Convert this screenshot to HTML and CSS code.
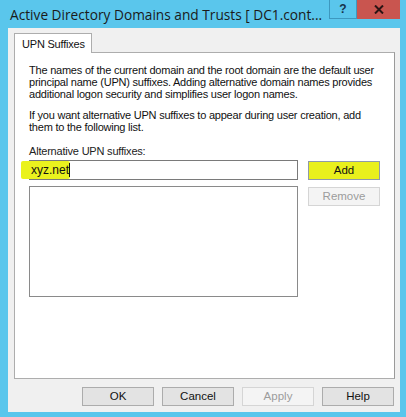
FILE: index.html
```html
<!DOCTYPE html>
<html>
<head>
<meta charset="utf-8">
<link rel="stylesheet" href="styles.css">
</head>
<body>
<div class="window">
  <div class="titlebar">
    <div class="title">Active Directory Domains and Trusts [ DC1.cont...</div>
    <div class="caption-btns">
      <div class="cap-help">?</div>
      <div class="cap-close">
        <svg width="10" height="9" viewBox="0 0 10 9"><path d="M1 0.5 L9 8.5 M9 0.5 L1 8.5" stroke="#2b1414" stroke-width="2"/></svg>
      </div>
    </div>
  </div>
  <div class="client">
    <div class="tabs">
      <div class="tab">UPN Suffixes</div>
    </div>
    <div class="panel">
      <p class="para">The names of the current domain and the root domain are the default user<br>principal name (UPN) suffixes. Adding alternative domain names provides<br>additional logon security and simplifies user logon names.</p>
      <p class="para para2">If you want alternative UPN suffixes to appear during user creation, add<br>them to the following list.</p>
      <div class="label">Alternative UPN suffixes:</div>
      <div class="row">
        <div class="input"><span class="hl">xyz.net</span><span class="caret"></span></div>
        <div class="btn btn-add">Add</div>
      </div>
      <div class="row row2">
        <div class="listbox"></div>
        <div class="btn disabled">Remove</div>
      </div>
    </div>
    <div class="footer">
      <div class="btn">OK</div>
      <div class="btn">Cancel</div>
      <div class="btn disabled">Apply</div>
      <div class="btn">Help</div>
    </div>
  </div>
</div>
</body>
</html>
```
FILE: styles.css
```css
html, body {
  margin: 0;
  padding: 0;
}
body {
  width: 406px;
  height: 417px;
  overflow: hidden;
  background: #5ac6ec;
  font-family: "Liberation Sans", Arial, sans-serif;
  font-size: 11px;
  color: #111;
}
.window {
  width: 406px;
  height: 417px;
  display: flex;
  flex-direction: column;
}
.titlebar {
  height: 28px;
  display: flex;
  align-items: flex-start;
}
.title {
  flex: 1;
  min-width: 0;
  font-family: "Open Sans", "Noto Sans", sans-serif;
  font-size: 13.7px;
  color: #1a1a1a;
  padding-left: 10px;
  line-height: 29px;
  white-space: nowrap;
}
.caption-btns {
  flex-shrink: 0;
  display: flex;
  margin-right: 6px;
}
.cap-help {
  width: 26px;
  height: 18px;
  border: 1px solid #3d98bf;
  border-top: none;
  text-align: center;
  font-family: "Liberation Sans", Arial, sans-serif;
  font-weight: bold;
  font-size: 12px;
  line-height: 18px;
  color: #17324a;
}
.cap-close {
  width: 43px;
  height: 19px;
  background: #c9554f;
  display: flex;
  align-items: center;
  justify-content: center;
}
.client {
  margin: 0 6px 5px 8px;
  flex: 1;
  background: #f0f0f0;
  padding: 5px 5px 0 6px;
  display: flex;
  flex-direction: column;
}
.tabs {
  display: flex;
  height: 19px;
}
.tab {
  width: 78px;
  height: 20px;
  background: #fff;
  border: 1px solid #adadad;
  border-bottom: none;
  padding-left: 7px;
  box-sizing: border-box;
  line-height: 20px;
  position: relative;
  z-index: 1;
  letter-spacing: -0.2px;
}
.panel {
  height: 327px;
  box-sizing: border-box;
  background: #fff;
  border: 1px solid #adadad;
  border-right-color: #9a9a9a;
  padding: 12px 0 0 14px;
}
.para {
  margin: 0;
  white-space: nowrap;
  line-height: 11.8px;
  letter-spacing: -0.22px;
}
.para2 {
  margin-top: 10px;
}
.label {
  margin-top: 11px;
  line-height: 12px;
  color: #222;
  letter-spacing: -0.2px;
}
.row {
  display: flex;
  align-items: flex-start;
  gap: 10px;
  margin-top: 3px;
}
.row2 {
  margin-top: 6px;
}
.input {
  width: 269px;
  height: 20px;
  box-sizing: border-box;
  border: 1px solid #7a7a7a;
  display: flex;
  align-items: center;
}
.hl {
  background: #eaf21e;
  margin-left: -9px;
  padding: 3px 1px 3px 10px;
  line-height: 12px;
  font-size: 12px;
  border-radius: 2px;
}
.caret {
  width: 1px;
  height: 14px;
  background: #111;
  margin-left: -1px;
}
.listbox {
  width: 269px;
  height: 111px;
  box-sizing: border-box;
  border: 1px solid #8a8a8a;
}
.btn {
  width: 72px;
  height: 19px;
  box-sizing: border-box;
  border: 1px solid #acacac;
  background: #e3e3e3;
  text-align: center;
  line-height: 17px;
  font-size: 11.5px;
  color: #111;
}
.btn-add {
  background: #e9f01c;
  border-color: #8f9aa8;
  margin-top: 1px;
}
.row2 .btn {
  margin-top: 1px;
}
.btn.disabled {
  background: #f4f4f4;
  border-color: #d5d5d5;
  color: #9c9c9c;
}
.footer {
  display: flex;
  justify-content: flex-end;
  gap: 8px;
  margin-top: 8px;
  padding-right: 1px;
}
```
